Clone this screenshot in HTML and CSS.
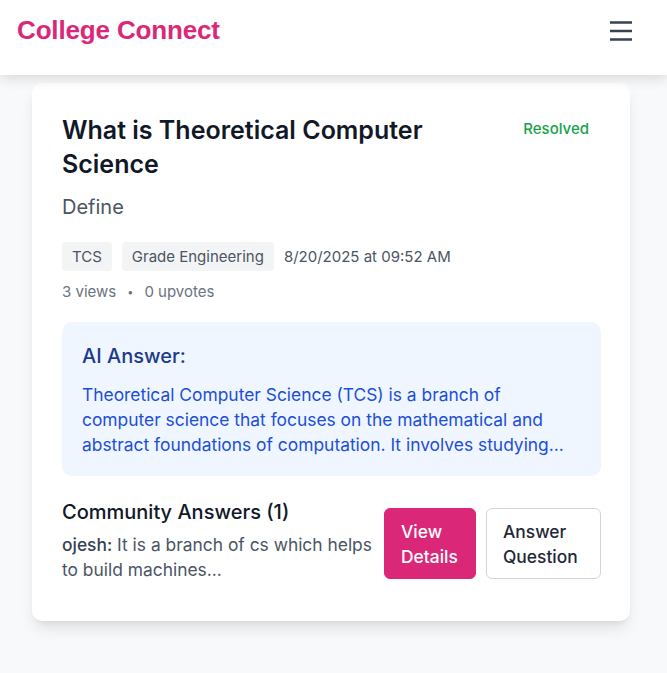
FILE: index.html
```html
<!DOCTYPE html>
<html lang="en">
<head>
<meta charset="utf-8">
<title>College Connect</title>
<link rel="stylesheet" href="styles.css">
</head>
<body>
<header class="topbar">
  <div class="brand">College Connect</div>
  <button class="menu-btn" aria-label="Menu">
    <svg width="26" height="26" viewBox="0 0 26 26" fill="none" stroke="#374151" stroke-width="2.4" stroke-linecap="butt">
      <path d="M2 5.5h22M2 14h22M2 22.5h22"/>
    </svg>
  </button>
</header>
<main class="page">
  <article class="card">
    <div class="card-head">
      <h1 class="title">What is Theoretical Computer Science</h1>
      <span class="status">Resolved</span>
    </div>
    <p class="desc">Define</p>
    <div class="meta">
      <span class="tag">TCS</span>
      <span class="tag">Grade Engineering</span>
      <span class="date">8/20/2025 at 09:52 AM</span>
    </div>
    <div class="stats">
      <span>3 views</span>
      <span class="dot">•</span>
      <span>0 upvotes</span>
    </div>
    <section class="ai-box">
      <h2 class="ai-title">AI Answer:</h2>
      <p class="ai-text">Theoretical Computer Science (TCS) is a branch of computer science that focuses on the mathematical and abstract foundations of computation. It involves studying...</p>
    </section>
    <section class="community">
      <div class="community-info">
        <h3 class="community-title">Community Answers (1)</h3>
        <p class="community-text"><strong>ojesh:</strong> It is a branch of cs which helps to build machines...</p>
      </div>
      <div class="actions">
        <button class="btn btn-primary">View Details</button>
        <button class="btn btn-outline">Answer Question</button>
      </div>
    </section>
  </article>
</main>
</body>
</html>
```

FILE: styles.css
```css
* { box-sizing: border-box; }
html, body { margin: 0; padding: 0; }
body {
  background: #f8f9fb;
  font-family: Inter, "Noto Sans", sans-serif;
  color: #111827;
  min-height: 673px;
}
.topbar {
  height: 75px;
  background: #fff;
  box-shadow: 0 4px 12px rgba(0,0,0,0.12);
  display: flex;
  justify-content: space-between;
  align-items: flex-start;
  padding: 13px 33px 0 17px;
  position: relative;
  z-index: 2;
}
.brand {
  font-family: "Liberation Sans", Arial, sans-serif;
  font-weight: 700;
  font-size: 26px;
  line-height: 34px;
  color: #db2777;
  letter-spacing: -0.15px;
}
.menu-btn {
  background: none;
  border: 0;
  padding: 0;
  margin-top: 4px;
  width: 26px;
  height: 26px;
}
.menu-btn svg { display: block; }
.page {
  padding: 8px 37px 40px 32px;
}
.card {
  background: #fff;
  border-radius: 10px;
  box-shadow: 0 10px 15px -3px rgba(0,0,0,0.1), 0 4px 6px -4px rgba(0,0,0,0.1);
  padding: 30px 29px 39px 30px;
}
.card-head {
  display: flex;
  justify-content: space-between;
  align-items: flex-start;
  gap: 16px;
}
.title {
  margin: 0;
  font-size: 25px;
  line-height: 34px;
  font-weight: 600;
  color: #111827;
  max-width: 400px;
}
.status {
  font-size: 15px;
  font-weight: 500;
  color: #16a34a;
  line-height: 20px;
  margin-top: 6px;
  margin-right: 12px;
}
.desc {
  margin: 12px 0 0;
  font-size: 20px;
  line-height: 28px;
  color: #4b5563;
}
.meta {
  display: flex;
  align-items: center;
  gap: 10px;
  margin-top: 21px;
}
.tag {
  background: #f3f4f6;
  color: #4b5563;
  font-size: 15px;
  line-height: 20px;
  padding: 4.5px 10px;
  border-radius: 4px;
}
.date {
  font-size: 15px;
  color: #4b5563;
  line-height: 20px;
}
.stats {
  margin-top: 11px;
  display: flex;
  gap: 11px;
  font-size: 15px;
  line-height: 20px;
  color: #6b7280;
}
.dot { font-size: 11px; }
.ai-box {
  margin-top: 20px;
  background: #eff6ff;
  border-radius: 10px;
  padding: 20px 20px 19px;
}
.ai-title {
  margin: 0;
  font-size: 20px;
  line-height: 28px;
  font-weight: 500;
  color: #1e3a8a;
}
.ai-text {
  margin: 12px 0 0;
  font-size: 17.4px;
  line-height: 25px;
  color: #1d4ed8;
}
.community {
  margin-top: 22px;
  display: flex;
  align-items: center;
  gap: 10px;
}
.community-info { flex: 1; min-width: 0; }
.community-title {
  margin: 0;
  font-size: 20px;
  line-height: 28px;
  font-weight: 500;
  color: #111827;
}
.community-text {
  margin: 6px 0 0;
  font-size: 17.4px;
  line-height: 25px;
  color: #4b5563;
}
.community-text strong { font-weight: 500; color: #374151; }
.actions {
  display: flex;
  gap: 10px;
  flex-shrink: 0;
  margin-top: 6px;
}
.btn {
  font-family: Inter, "Noto Sans", sans-serif;
  font-size: 17.4px;
  line-height: 25px;
  font-weight: 500;
  text-align: left;
  border-radius: 6px;
  padding: 10px 15px 10px 16px;
  height: 71px;
}
.btn-primary {
  width: 92px;
  background: #db2777;
  color: #fff;
  border: 1px solid #db2777;
}
.btn-outline {
  width: 115px;
  background: #fff;
  color: #1f2937;
  border: 1px solid #d1d5db;
}
```
